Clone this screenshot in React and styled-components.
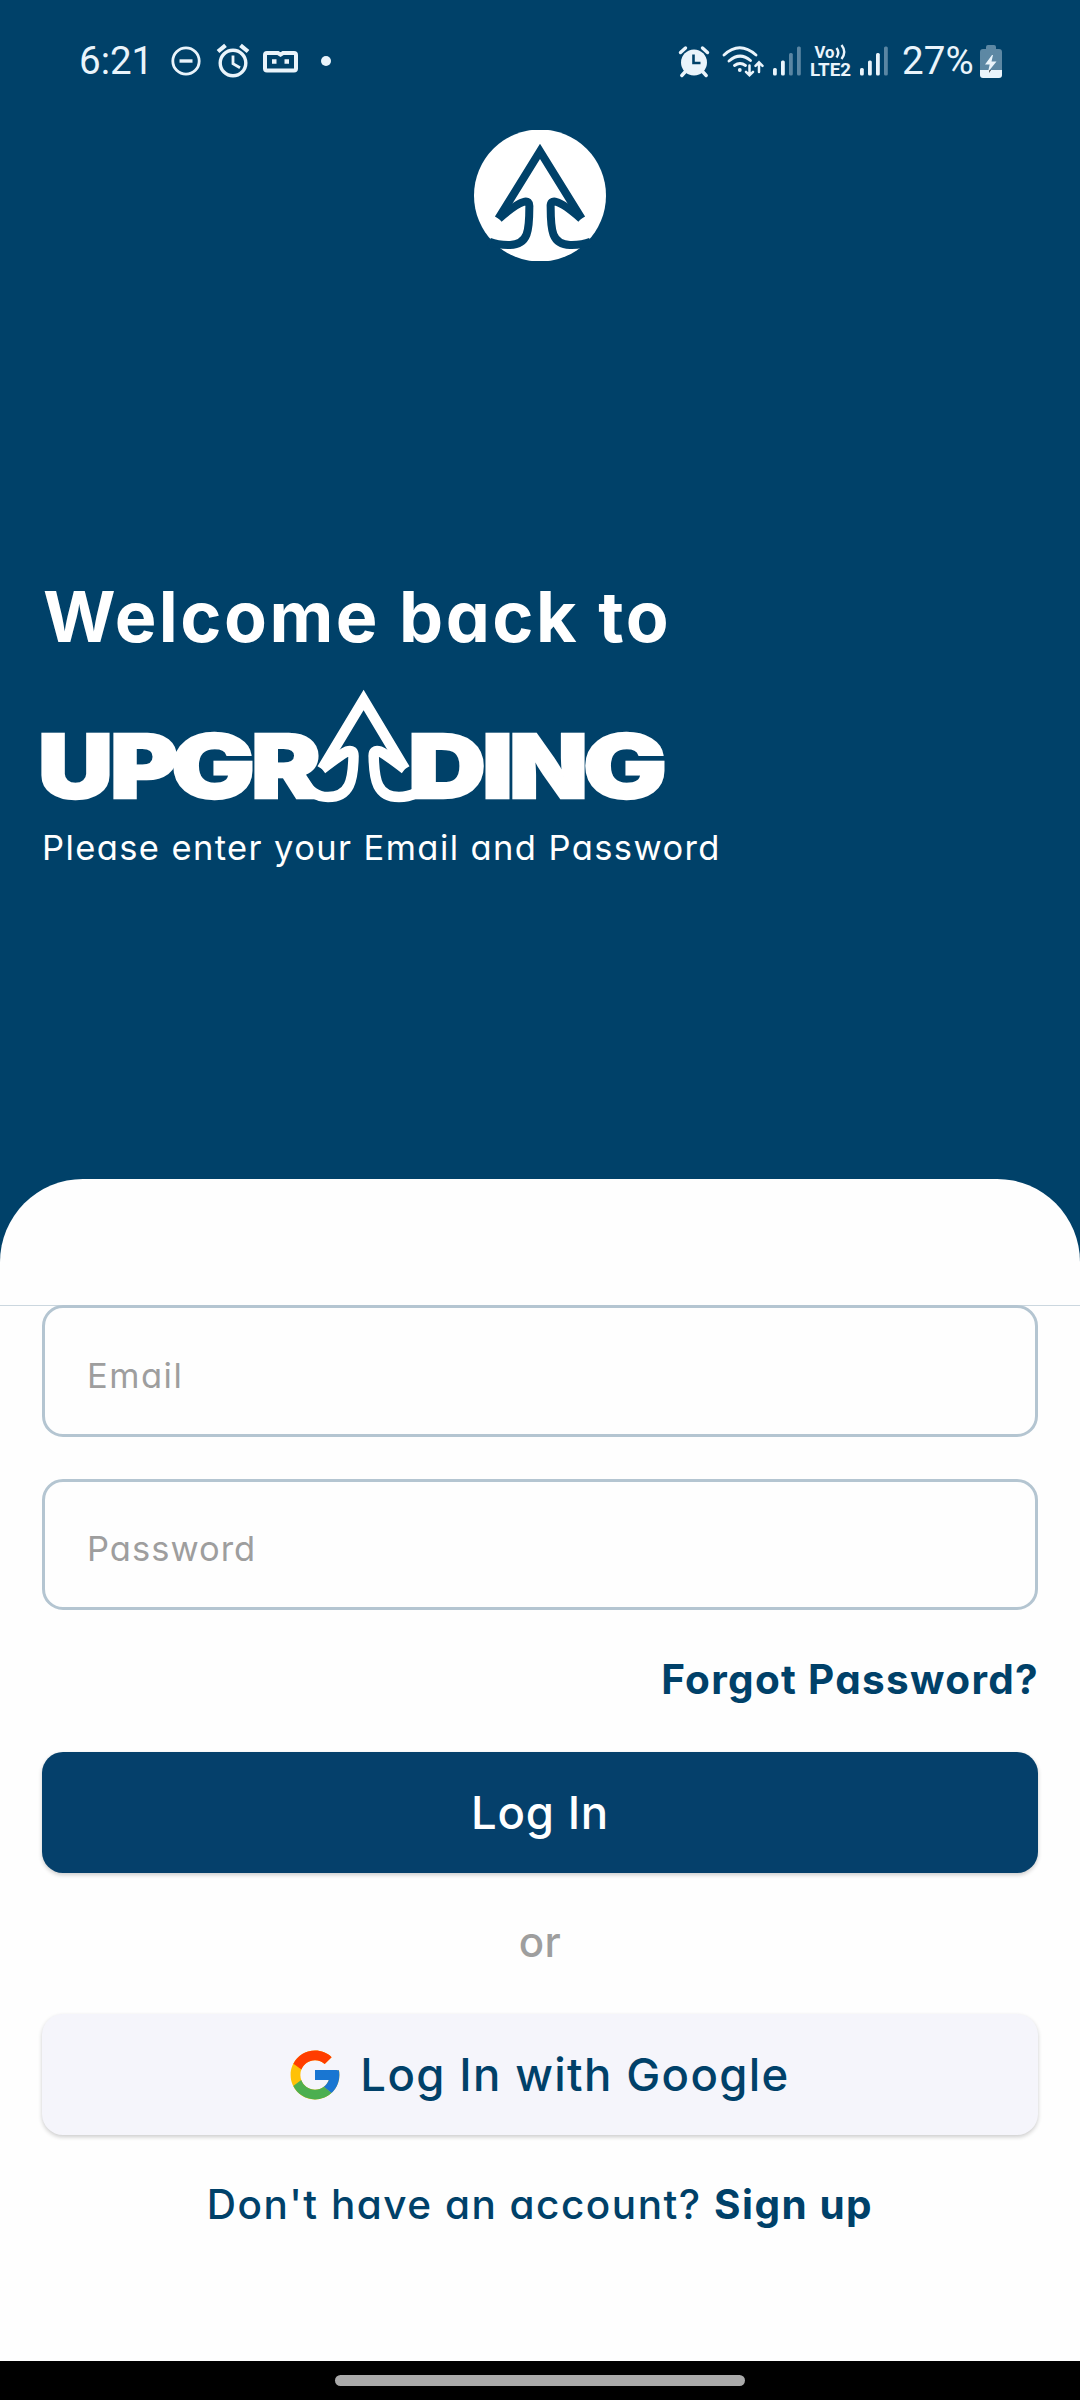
import React from "react";
import styled, { createGlobalStyle } from "styled-components";

const NAVY = "#004169";
const ICE = "#eaf4fb";

const GlobalStyle = createGlobalStyle`
  *, *::before, *::after { box-sizing: border-box; }
  body {
    margin: 0;
    background: ${NAVY};
    font-family: Inter, "Open Sans", sans-serif;
    font-feature-settings: "cv11" 1;
  }
`;

const Screen = styled.div`
  display: flex;
  flex-direction: column;
  width: 1080px;
  height: 2400px;
  overflow: hidden;
  background: ${NAVY};
`;

const StatusBar = styled.header`
  display: flex;
  justify-content: space-between;
  align-items: center;
  height: 122px;
  padding: 0 78px 0 79px;
  flex: none;
`;

const StatusGroup = styled.div`
  display: flex;
  align-items: center;
`;

const StatusText = styled.span`
  font-family: Roboto, sans-serif;
  font-size: 38.5px;
  line-height: 44px;
  color: ${ICE};
  letter-spacing: ${(p) => p.$spacing || "0"};
  margin-left: ${(p) => p.$left || 0}px;
`;

const Glyph = styled.svg`
  display: block;
  flex: none;
  overflow: visible;
  margin-left: ${(p) => p.$left || 0}px;
`;

const Hero = styled.section`
  display: flex;
  flex-direction: column;
  height: 1057px;
  padding: 8px 42px 0;
  flex: none;
`;

const Badge = styled.svg`
  display: block;
  align-self: center;
  width: 132px;
  height: 131px;
`;

const Title = styled.h1`
  margin: 312px 0 0 1px;
  font-size: 70px;
  line-height: 88px;
  font-weight: 700;
  letter-spacing: 2.5px;
  white-space: nowrap;
  color: #fff;
`;

const Wordmark = styled.svg`
  display: block;
  width: 622px;
  height: 113px;
  margin-top: 28px;
  overflow: visible;
`;

const Subtitle = styled.p`
  margin: 26px 0 0 0;
  font-size: 34.5px;
  line-height: 40px;
  letter-spacing: 1.4px;
  white-space: nowrap;
  color: #fff;
`;

const Sheet = styled.main`
  flex: 1;
  padding-top: 126px;
  border-radius: 83px 83px 0 0;
  background: #fefefe;
`;

const Form = styled.form`
  display: flex;
  flex-direction: column;
  padding: 0 42px;
  border-top: 1px solid #cbd7df;
`;

const Field = styled.input`
  display: block;
  width: 100%;
  height: ${(p) => p.$height}px;
  margin: ${(p) => p.$top}px 0 0;
  padding: 8px 42px 0;
  border: 3px solid #b4c5d1;
  border-radius: 21px;
  outline: none;
  background: transparent;
  font-family: inherit;
  font-feature-settings: inherit;
  font-size: 34.5px;
  letter-spacing: ${(p) => p.$spacing};
  color: ${NAVY};
  &::placeholder { color: #9e9e9e; opacity: 1; }
`;

const Forgot = styled.a`
  align-self: flex-end;
  margin-top: 45px;
  margin-right: -1px;
  font-size: 40.5px;
  line-height: 50px;
  font-weight: 700;
  letter-spacing: 1.3px;
  white-space: nowrap;
  color: ${NAVY};
`;

const Button = styled.button`
  display: flex;
  align-items: center;
  justify-content: center;
  gap: 20px;
  width: 100%;
  height: 121px;
  margin: ${(p) => p.$top}px 0 0;
  padding: 0;
  border: 0;
  border-radius: 21px;
  box-shadow: 0 2px 4px rgba(0, 0, 0, 0.2);
  background: ${(p) => (p.$light ? "#f5f5fb" : "#05406b")};
  color: ${(p) => (p.$light ? NAVY : "#fff")};
  font-family: inherit;
  font-feature-settings: inherit;
  font-size: 45.5px;
  font-weight: 500;
  letter-spacing: ${(p) => p.$spacing};
  white-space: nowrap;
`;

const Divider = styled.div`
  height: 60px;
  margin-top: 39px;
  text-align: center;
  font-size: 42px;
  line-height: 60px;
  font-weight: 500;
  letter-spacing: 0.5px;
  color: #9e9e9e;
`;

const SignUp = styled.p`
  margin: 40px 0 0;
  text-align: center;
  font-size: 40.5px;
  line-height: 60px;
  font-weight: 450;
  letter-spacing: 1.5px;
  white-space: nowrap;
  color: ${NAVY};
  b { font-weight: 700; }
`;

const NavBar = styled.footer`
  display: flex;
  justify-content: center;
  align-items: center;
  height: 39px;
  flex: none;
  background: #000;
`;

const NavHandle = styled.div`
  width: 410px;
  height: 11px;
  border-radius: 5.5px;
  background: #aaa;
`;

function DoNotDisturb() {
  return (
    <Glyph $left={18} width="30" height="30" viewBox="0 0 30 30" fill="none" stroke={ICE} strokeWidth="2.8">
      <circle cx="15" cy="15" r="13.2" />
      <path d="M8.5 15h13" strokeWidth="3.4" />
    </Glyph>
  );
}

function AlarmOutline() {
  return (
    <Glyph $left={16} width="32" height="34" viewBox="0 0 32 34" fill="none" stroke={ICE}>
      <circle cx="16" cy="19" r="12.8" strokeWidth="3.4" />
      <path d="M16 11.5v8.2l7 4" strokeWidth="2.8" />
      <path d="M1 7.5l7.5-6.2M31 7.5l-7.5-6.2" strokeWidth="4.2" />
    </Glyph>
  );
}

function Recorder() {
  return (
    <Glyph $left={14} width="35" height="23" viewBox="0 0 35 23" fill="none" stroke={ICE}>
      <path d="M4 3h11l2.5 1.6L20 3h11q2 0 2 2v13.5q0 2-2 2H4q-2 0-2-2V5q0-2 2-2z" strokeWidth="4" />
      <path d="M9 11.5h4.5M21.5 11.5h4.5" strokeWidth="4.5" />
    </Glyph>
  );
}

function AlarmSolid() {
  return (
    <Glyph width="30" height="31" viewBox="0 0 30 31">
      <circle cx="15" cy="16.5" r="13" fill={ICE} />
      <path d="M6 26l-3.2 3.5M24 26l3.2 3.5M1.5 6.5l5-4.5M28.5 6.5l-5-4.5" stroke={ICE} strokeWidth="3.4" strokeLinecap="round" />
      <path d="M14.5 8.5v8.5h7" fill="none" stroke={NAVY} strokeWidth="2.6" />
    </Glyph>
  );
}

function Wifi() {
  return (
    <Glyph $left={13} width="42" height="32" viewBox="0 0 42 32" fill="none" stroke={ICE} strokeLinecap="round">
      <path d="M2 10q15.5-14.5 32 0" strokeWidth="2.9" />
      <path d="M7 16q11-9.5 21.5-.5" strokeWidth="2.9" />
      <path d="M12.5 20.5q5.5-4 11 0" strokeWidth="2.9" />
      <circle cx="17.8" cy="25" r="1.9" fill={ICE} stroke="none" />
      <path d="M27.5 20.5v9.5M24 26.8l3.5 3.5 3.5-3.5M37 27v-9.5M33.5 20.8L37 17.3l3.5 3.5" strokeWidth="2.5" />
    </Glyph>
  );
}

function Signal({ level, left }) {
  const tops = [22, 14.5, 7, 0.5];
  return (
    <Glyph $left={left} width="28" height="30" viewBox="0 0 28 30">
      {tops.map((y, i) => (
        <rect key={y} x={i * 8} y={y} width="3.8" height={29.5 - y} rx="1.5" fill={i < level ? ICE : "#5a86a3"} />
      ))}
    </Glyph>
  );
}

function Volte() {
  return (
    <Glyph $left={9} width="41" height="32" viewBox="0 0 41 32" fill={ICE}>
      <text x="4.5" y="12.5" fontFamily="Roboto, sans-serif" fontWeight="700" fontSize="17" textLength="20" lengthAdjust="spacingAndGlyphs">Vo</text>
      <path d="M26.5 3q3.5 4.500 0 9.500M31.500 0q5.500 7 0 14" fill="none" stroke={ICE} strokeWidth="2.4" />
      <text x="0" y="31" fontFamily="Roboto, sans-serif" fontWeight="700" fontSize="18" textLength="41" lengthAdjust="spacingAndGlyphs">LTE2</text>
    </Glyph>
  );
}

function Battery() {
  return (
    <Glyph $left={6} width="22" height="33" viewBox="0 0 22 33">
      <path d="M6 4V2q0-2 2-2h6q2 0 2 2v2h3q3 0 3 3v18H0V7q0-3 3-3z" fill="#5d88a4" />
      <path d="M0 25h22v5q0 3-3 3H3q-3 0-3-3z" fill={ICE} />
      <path d="M12 10L5 19.5h4.7L8 27l8.5-10.5h-5L13 10z" fill={ICE} />
      <path d="M9.5 25h1.5l-2 3z" fill="#222" />
    </Glyph>
  );
}

function BadgeLogo() {
  return (
    <Badge viewBox="42 30 396 393">
      <circle cx="240" cy="226.5" r="198" fill="#fff" />
      <g fill="none" stroke={NAVY} strokeWidth="24" strokeMiterlimit="3">
        <path d="M115 296L240 94L365 296" />
        <path d="M117 296Q168 252 190 246Q210 240 208 262C208 330 205 374 150 375Q115 376 88 365" />
        <path d="M363 296Q312 252 290 246Q270 240 272 262C272 330 275 374 330 375Q365 376 392 365" />
      </g>
    </Badge>
  );
}

const WORDMARK_LETTERS = [
  { char: "U", x: 38, width: 75 },
  { char: "P", x: 110, width: 68 },
  { char: "G", x: 171, width: 84 },
  { char: "R", x: 251, width: 70 },
  { char: "D", x: 408, width: 78 },
  { char: "I", x: 482, width: 31 },
  { char: "N", x: 509, width: 79 },
  { char: "G", x: 583, width: 84 },
];

function WordmarkLogo() {
  return (
    <Wordmark viewBox="42 689 622 113">
      <g fontFamily="Inter, sans-serif" fontWeight="900" fontSize="87.5" fill="#fff" stroke="#fff" strokeWidth="2.4">
        {WORDMARK_LETTERS.map(({ char, x, width }) => (
          <text key={x} x={x} y="798" textLength={width} lengthAdjust="spacingAndGlyphs">
            {char}
          </text>
        ))}
      </g>
      <g fill="none" stroke="#fff" strokeWidth="10.5" strokeMiterlimit="3">
        <path d="M322 769L363.6 700L405 769" />
        <path d="M322 769Q343 753 347 751.5Q354 749 353.5 757C353 780 350 797 328 797C315 797 308 790 303 780" />
        <path d="M405 769Q384 753 380 751.5Q373 749 373.7 757C374.2 780 377 797 399 797Q408 797 416 793" />
      </g>
    </Wordmark>
  );
}

function GoogleLogo() {
  return (
    <svg width="50" height="50" viewBox="3.5 3.5 41 41">
      <path fill="#FFC107" d="M43.611 20.083H42V20H24v8h11.303c-1.649 4.657-6.080 8-11.303 8-6.627 0-12-5.373-12-12s5.373-12 12-12c3.059 0 5.842 1.154 7.961 3.039l5.657-5.657C34.046 6.053 29.268 4 24 4 12.955 4 4 12.955 4 24s8.955 20 20 20 20-8.955 20-20c0-1.341-.138-2.650-.389-3.917z" />
      <path fill="#FF3D00" d="M6.306 14.691l6.571 4.819C14.655 15.108 18.961 12 24 12c3.059 0 5.842 1.154 7.961 3.039l5.657-5.657C34.046 6.053 29.268 4 24 4 16.318 4 9.656 8.337 6.306 14.691z" />
      <path fill="#4CAF50" d="M24 44c5.166 0 9.860-1.977 13.409-5.192l-6.190-5.238C29.211 35.091 26.715 36 24 36c-5.202 0-9.619-3.317-11.283-7.946l-6.522 5.025C9.505 39.556 16.227 44 24 44z" />
      <path fill="#1976D2" d="M43.611 20.083H42V20H24v8h11.303c-.792 2.237-2.231 4.166-4.087 5.571l6.193 5.238C36.971 39.205 44 34 44 24c0-1.341-.138-2.650-.389-3.917z" />
    </svg>
  );
}

export default function App() {
  return (
    <>
      <GlobalStyle />
      <Screen>
        <StatusBar>
          <StatusGroup>
            <StatusText>6:21</StatusText>
            <DoNotDisturb />
            <AlarmOutline />
            <Recorder />
            <Glyph $left={23} width="10" height="10" viewBox="0 0 10 10">
              <circle cx="5" cy="5" r="5" fill={ICE} />
            </Glyph>
          </StatusGroup>
          <StatusGroup>
            <AlarmSolid />
            <Wifi />
            <Signal level={2} left={9} />
            <Volte />
            <Signal level={3} left={9} />
            <StatusText $left={14} $spacing="0.2px">27%</StatusText>
            <Battery />
          </StatusGroup>
        </StatusBar>
        <Hero>
          <BadgeLogo />
          <Title>Welcome back to</Title>
          <WordmarkLogo />
          <Subtitle>Please enter your Email and Password</Subtitle>
        </Hero>
        <Sheet>
          <Form>
            <Field $top={-1} $height={132} $spacing="1.5px" placeholder="Email" />
            <Field $top={42} $height={131} $spacing="1px" type="password" placeholder="Password" />
            <Forgot>Forgot Password?</Forgot>
            <Button $top={47} $spacing="0.8px" type="button">Log In</Button>
            <Divider>or</Divider>
            <Button $top={42} $spacing="1.35px" $light type="button">
              <GoogleLogo />
              <span>Log In with Google</span>
            </Button>
            <SignUp>
              Don't have an account? <b>Sign up</b>
            </SignUp>
          </Form>
        </Sheet>
        <NavBar>
          <NavHandle />
        </NavBar>
      </Screen>
    </>
  );
}
